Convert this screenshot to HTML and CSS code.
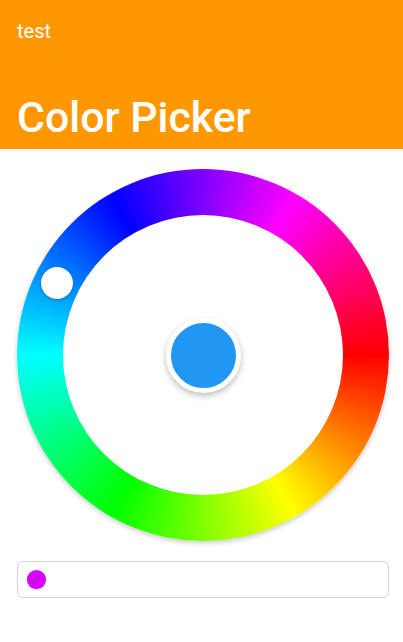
FILE: index.html
```html
<!DOCTYPE html>
<html>
<head>
<meta charset="utf-8">
<link rel="stylesheet" href="styles.css">
</head>
<body>
<header class="appbar">
  <div class="subtitle">test</div>
  <h1 class="title">Color Picker</h1>
</header>
<main class="content">
  <div class="wheel">
    <div class="hole">
      <div class="swatch"></div>
    </div>
    <div class="handle"></div>
  </div>
  <div class="field">
    <span class="dot"></span>
  </div>
</main>
</body>
</html>
```
FILE: styles.css
```css
html, body {
  margin: 0;
  padding: 0;
  background: #fff;
  font-family: Roboto, "Liberation Sans", sans-serif;
}
.appbar {
  background: #ff9800;
  color: #fff;
  height: 149px;
  box-sizing: border-box;
  padding: 18px 17px 0 17px;
  display: flex;
  flex-direction: column;
}
.subtitle {
  font-size: 20px;
  line-height: 26px;
}
.title {
  margin: 0;
  margin-top: auto;
  font-size: 42.8px;
  font-weight: 500;
  line-height: 52px;
  padding-bottom: 6px;
}
.content {
  padding: 20px 17px 0 17px;
  display: flex;
  flex-direction: column;
  gap: 20px;
}
.wheel {
  position: relative;
  width: 372px;
  height: 372px;
  border-radius: 50%;
  background: conic-gradient(from 90deg, #ff0000, #ffff00, #00ff00, #00ffff, #0000ff, #ff00ff, #ff0000);
  box-shadow: 0 2px 5px rgba(0,0,0,0.22);
  display: flex;
  align-items: center;
  justify-content: center;
}
.hole {
  width: 280px;
  height: 280px;
  border-radius: 50%;
  background: #fff;
  display: flex;
  align-items: center;
  justify-content: center;
}
.swatch {
  width: 65px;
  height: 65px;
  border-radius: 50%;
  background: #2196f3;
  border: 5px solid #fff;
  box-shadow: 0 3px 6px rgba(0,0,0,0.25);
}
.handle {
  position: absolute;
  left: 24px;
  top: 98px;
  width: 32px;
  height: 32px;
  border-radius: 50%;
  background: #fff;
  box-shadow: 0 1px 3px rgba(0,0,0,0.3);
}
.field {
  width: 372px;
  height: 37px;
  box-sizing: border-box;
  border: 1px solid #d3d3d3;
  border-radius: 6px;
  display: flex;
  align-items: center;
  padding-left: 9px;
}
.dot {
  width: 19px;
  height: 19px;
  border-radius: 50%;
  background: #d500f9;
  box-shadow: 0 1px 2px rgba(0,0,0,0.25);
}
```
